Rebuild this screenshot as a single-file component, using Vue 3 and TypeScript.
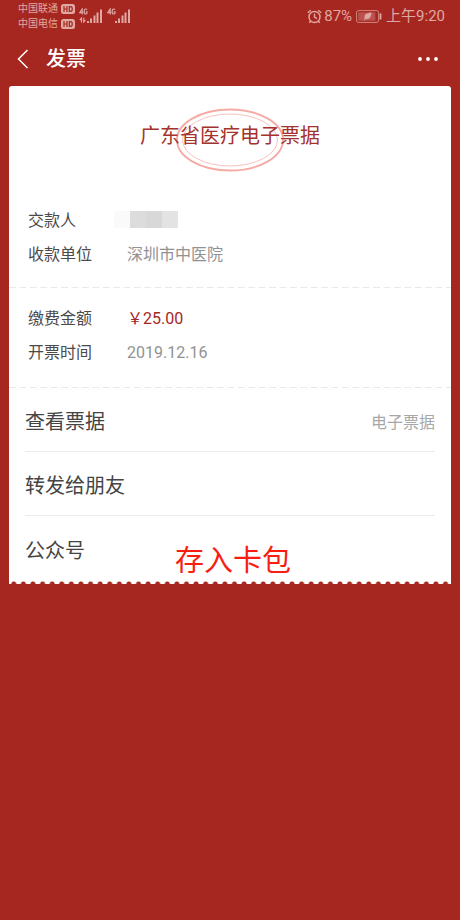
<script setup lang="ts">
interface Field {
  label: string
  value: string
  kind: 'masked' | 'plain' | 'price'
}
interface Action {
  label: string
  note?: string
}

const carriers: string[] = ['中国联通', '中国电信']
const groups: Field[][] = [
  [
    { label: '交款人', value: '', kind: 'masked' },
    { label: '收款单位', value: '深圳市中医院', kind: 'plain' },
  ],
  [
    { label: '缴费金额', value: '￥25.00', kind: 'price' },
    { label: '开票时间', value: '2019.12.16', kind: 'plain' },
  ],
]
const actions: Action[] = [
  { label: '查看票据', note: '电子票据' },
  { label: '转发给朋友' },
  { label: '公众号' },
]
</script>

<template>
  <div class="screen">
    <div class="status">
      <div class="carriers">
        <div v-for="name in carriers" :key="name" class="carrier">
          <span>{{ name }}</span>
          <svg class="hd" width="14" height="10" viewBox="0 0 14 10" aria-hidden="true">
            <rect x="0" y="0" width="14" height="10" rx="2.5" fill="currentColor" />
            <path d="M3 2v6M6 2v6M3 5h3M8.3 2.6v4.8h1.2q1.8 0 1.8-2.4t-1.8-2.4z" fill="none" stroke="#a6271f" stroke-width="1.2" />
          </svg>
        </div>
      </div>
      <svg class="signals" width="52" height="16" viewBox="0 0 52 16" aria-hidden="true">
        <g fill="none" stroke="currentColor" stroke-width="1.2">
          <path d="M3.2 6.5V1L.8 4.6h3.4M8 1.8Q7.6 1 6.6 1 5.2 1 5.2 3.5T6.6 6Q8 6 8 5V3.8H6.8" />
          <path d="M31.2 6.5V1l-2.4 3.6h3.4M36 1.8Q35.6 1 34.6 1q-1.4 0-1.4 2.5T34.6 6Q36 6 36 5V3.8h-1.2" />
          <path d="M2.5 14.5V10.2L.8 12M4.8 9.8V14L6.5 12.2" />
        </g>
        <g fill="currentColor">
          <path d="M8 13h2v2H8zM11 10.5h2V15h-2zM14.5 7.5h2V15h-2zM17.5 4.5h2V15h-2zM21 1.5h2V15h-2z" />
          <path d="M36 13h2v2h-2zM39 10.5h2V15h-2zM42.5 7.5h2V15h-2zM45.5 4.5h2V15h-2zM49 1.5h2V15h-2z" />
        </g>
      </svg>
      <div class="right">
        <svg width="15" height="15" viewBox="0 0 15 15" fill="none" stroke="currentColor" stroke-width="1.4" aria-hidden="true">
          <circle cx="7.5" cy="8" r="5.5" />
          <path d="M7.5 4.8V8.2L10 9.7M.8 3.8 3.8 1.2M14.2 3.8 11.2 1.2M3.7 12 2.3 13.8M11.3 12l1.4 1.8" />
        </svg>
        <span class="percent">87%</span>
        <svg class="battery" width="26" height="13" viewBox="0 0 26 13" aria-hidden="true">
          <rect x=".6" y=".6" width="22" height="11.8" rx="2" fill="none" stroke="currentColor" stroke-opacity=".75" />
          <rect x="2.3" y="2.3" width="17" height="8.4" fill="currentColor" opacity=".35" />
          <path d="M15.5 2.5C11 2.8 7.5 4.5 8.8 8.3L7.8 10l.8.5 1-1.5C13.5 9.8 15.3 7 15.5 2.5z" fill="currentColor" />
          <path d="M24.5 3.5v6" stroke="currentColor" stroke-width="1.8" />
        </svg>
        <span>上午9:20</span>
      </div>
    </div>

    <header class="bar">
      <button class="back" type="button" aria-label="返回">
        <svg width="12" height="20" viewBox="0 0 12 20" fill="none" stroke="currentColor" stroke-width="1.5" aria-hidden="true">
          <path d="M10.5 1 1.5 10l9 9" />
        </svg>
      </button>
      <h1>发票</h1>
      <button class="more" type="button" aria-label="更多">
        <svg width="22" height="4" viewBox="0 0 22 4" fill="currentColor" aria-hidden="true">
          <circle cx="3" cy="2" r="1.9" /><circle cx="11" cy="2" r="1.9" /><circle cx="19" cy="2" r="1.9" />
        </svg>
      </button>
    </header>

    <main class="card">
      <div class="heading">
        <svg class="seal" width="110" height="64" viewBox="0 0 110 64" fill="none" aria-hidden="true">
          <ellipse cx="55" cy="32" rx="53" ry="30.5" stroke="#f6aaa4" stroke-width="1.9" />
          <ellipse cx="55" cy="32" rx="47.5" ry="26" stroke="#f8c2be" stroke-width="1" />
        </svg>
        <h2>广东省医疗电子票据</h2>
      </div>

      <dl v-for="(group, i) in groups" :key="i" class="group">
        <div v-for="field in group" :key="field.label" class="field">
          <dt>{{ field.label }}</dt>
          <dd :class="field.kind">
            <span v-if="field.kind === 'masked'" class="mosaic"><i /><i /><i /><i /></span>
            <template v-else>{{ field.value }}</template>
          </dd>
        </div>
        <svg class="dashes" width="100%" height="1" aria-hidden="true">
          <line x1="0" y1=".5" x2="100%" y2=".5" stroke="#e9e9e9" stroke-dasharray="7 3.4" />
        </svg>
      </dl>

      <nav class="actions">
        <a v-for="action in actions" :key="action.label" class="action" href="#">
          <span>{{ action.label }}</span>
          <span v-if="action.note" class="note">{{ action.note }}</span>
        </a>
        <button class="save" type="button">存入卡包</button>
      </nav>
      <div class="scallops" />
    </main>
  </div>
</template>

<style>
body {
  margin: 0;
  background: #a6271f;
}
</style>

<style scoped>
.screen {
  min-height: 100vh;
  background: #a6271f;
  font-family: Roboto, "Noto Sans CJK SC", sans-serif;
  font-weight: 400;
}
button {
  padding: 0;
  border: 0;
  background: none;
  color: inherit;
  font: inherit;
}
svg {
  display: block;
  flex: none;
}
h1, h2, dl, dd {
  margin: 0;
}
.status {
  display: flex;
  align-items: center;
  height: 32px;
  padding: 0 15px 0 18px;
  color: #e0a7a3;
}
.carriers {
  font-size: 10px;
  line-height: 15px;
}
.carrier {
  display: flex;
  align-items: center;
  gap: 3px;
}
.signals {
  margin-left: 4px;
}
.right {
  display: flex;
  align-items: center;
  gap: 4px;
  margin-left: auto;
  font-size: 15px;
  line-height: 32px;
}
.percent {
  margin-left: -2px;
}
.bar {
  display: flex;
  align-items: center;
  height: 54px;
  padding: 0 21px 0 17px;
  color: #fff;
}
.back {
  display: flex;
}
.bar h1 {
  margin-left: 17px;
  font-size: 20px;
  font-weight: 500;
  line-height: 28px;
}
.more {
  margin-left: auto;
}
.card {
  margin: 0 9px;
  border-radius: 3px 3px 0 0;
  background: #fff;
}
.heading {
  position: relative;
  padding: 35px 0 34px;
  text-align: center;
}
.heading h2 {
  position: relative;
  color: #a3332d;
  font-size: 20px;
  font-weight: 400;
  line-height: 30px;
}
.seal {
  position: absolute;
  top: 22px;
  left: calc(50% - 55px);
}
.group {
  position: relative;
  padding: 14px 19px 18px;
  font-size: 16px;
  line-height: 34px;
}
.heading + .group {
  padding: 19px 19px 16px;
}
.field {
  display: flex;
  height: 34px;
}
dt {
  width: 99px;
  color: #4a4a4a;
}
dd {
  color: #929292;
}
.price {
  color: #a6271f;
}
.mosaic {
  display: flex;
  margin: 7px 0 0 -13px;
}
.mosaic i {
  width: 16px;
  height: 17px;
  background: #dcdcdc;
}
.mosaic i:first-child {
  background: #fafafa;
}
.mosaic i:nth-child(3) {
  background: #d8d8d8;
}
.mosaic i:last-child {
  background: #e3e3e3;
}
.dashes {
  position: absolute;
  bottom: 0;
  left: 0;
}
.actions {
  position: relative;
  padding: 0 16px;
}
.action {
  display: flex;
  box-sizing: border-box;
  align-items: center;
  justify-content: space-between;
  height: 64px;
  padding-top: 2px;
  border-bottom: 1px solid #ebebeb;
  color: #444;
  font-size: 20px;
  text-decoration: none;
}
.action:last-of-type {
  border: 0;
}
.note {
  color: #a8a8a8;
  font-size: 16px;
}
.save {
  position: absolute;
  bottom: 0;
  left: 0;
  width: 100%;
  padding-left: 6px;
  color: #f81e12;
  font-size: 29px;
  line-height: 38px;
}
.scallops {
  height: 4px;
  background: radial-gradient(circle at 50% 100%, #a6271f 2px, transparent 3px) 0 0 / calc(100% / 46) 4px;
}
</style>
